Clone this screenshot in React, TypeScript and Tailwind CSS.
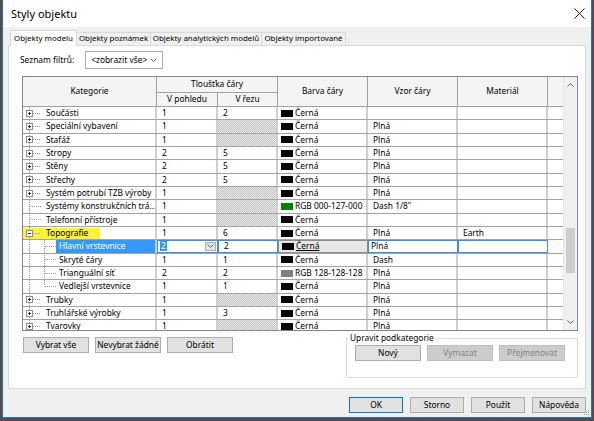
import React from "react";

type Row = {
  name: string;
  kind: "root" | "leaf" | "child";
  open?: boolean;
  v: string;
  r: string | null;
  swatch: string;
  color: string;
  pattern: string;
  mat?: string;
  hl?: boolean;
  sel?: boolean;
  last?: boolean;
};

const rows: Row[] = [
  { name: "Součásti", kind: "root", v: "1", r: "2", swatch: "#000", color: "Černá", pattern: "" },
  { name: "Speciální vybavení", kind: "root", v: "1", r: null, swatch: "#000", color: "Černá", pattern: "Plná" },
  { name: "Stafáž", kind: "root", v: "1", r: null, swatch: "#000", color: "Černá", pattern: "Plná" },
  { name: "Stropy", kind: "root", v: "2", r: "5", swatch: "#000", color: "Černá", pattern: "Plná" },
  { name: "Stěny", kind: "root", v: "2", r: "5", swatch: "#000", color: "Černá", pattern: "Plná" },
  { name: "Střechy", kind: "root", v: "2", r: "5", swatch: "#000", color: "Černá", pattern: "Plná" },
  { name: "Systém potrubí TZB výroby", kind: "root", v: "1", r: null, swatch: "#000", color: "Černá", pattern: "Plná" },
  { name: "Systémy konstrukčních trá...", kind: "leaf", v: "1", r: null, swatch: "#007f00", color: "RGB 000-127-000", pattern: "Dash 1/8\"" },
  { name: "Telefonní přístroje", kind: "leaf", v: "1", r: null, swatch: "#000", color: "Černá", pattern: "" },
  { name: "Topografie", kind: "root", open: true, hl: true, v: "1", r: "6", swatch: "#000", color: "Černá", pattern: "Plná", mat: "Earth" },
  { name: "Hlavní vrstevnice", kind: "child", sel: true, v: "2", r: "2", swatch: "#000", color: "Černá", pattern: "Plná" },
  { name: "Skryté čáry", kind: "child", v: "1", r: "1", swatch: "#000", color: "Černá", pattern: "Dash" },
  { name: "Trianguální síť", kind: "child", v: "2", r: "2", swatch: "#808080", color: "RGB 128-128-128", pattern: "Plná" },
  { name: "Vedlejší vrstevnice", kind: "child", last: true, v: "1", r: "1", swatch: "#000", color: "Černá", pattern: "Plná" },
  { name: "Trubky", kind: "root", v: "1", r: null, swatch: "#000", color: "Černá", pattern: "Plná" },
  { name: "Truhlářské výrobky", kind: "root", v: "1", r: "3", swatch: "#000", color: "Černá", pattern: "Plná" },
  { name: "Tvarovky", kind: "root", v: "1", r: null, swatch: "#000", color: "Černá", pattern: "Plná" },
];

const dot = { stroke: "#9b9b9b", strokeDasharray: "1 1", strokeWidth: 1 };

function TreeLines({ row }: { row: Row }) {
  const w = row.kind === "child" ? 33 : 20;
  return (
    <svg width={w} height="13" viewBox={`0 0 ${w} 13`} className="shrink-0 overflow-visible">
      <line x1="6.5" y1="0" x2="6.5" y2="13.5" {...dot} />
      {row.kind === "child" && (
        <>
          <line x1="21.5" y1="0" x2="21.5" y2={row.last ? 6.5 : 13.5} {...dot} />
          <line x1="22" y1="6.5" x2="33" y2="6.5" {...dot} />
        </>
      )}
      {row.kind === "leaf" && <line x1="7" y1="6.5" x2="18" y2="6.5" {...dot} />}
      {row.kind === "root" && (
        <>
          <line x1="10" y1="6.5" x2="18" y2="6.5" {...dot} />
          <rect x="3.5" y="3.5" width="6" height="6" fill="#fbfbfb" stroke="#8e8f8f" />
          <line x1="5" y1="6.5" x2="8" y2="6.5" stroke="#333" />
          {!row.open && <line x1="6.5" y1="5" x2="6.5" y2="8" stroke="#333" />}
        </>
      )}
    </svg>
  );
}

function Btn({ label, w = "w-[66px]", disabled, def }: { label: string; w?: string; disabled?: boolean; def?: boolean }) {
  return (
    <div
      className={`${w} h-[16px] flex items-center justify-center border whitespace-nowrap ${
        disabled
          ? "bg-[#cccccc] border-[#bfbfbf] text-[#838383]"
          : def
          ? "bg-[#e1e1e1] border-[#0078d7]"
          : "bg-[#e1e1e1] border-[#adadad]"
      }`}
    >
      {label}
    </div>
  );
}

function Chevron({ up }: { up?: boolean }) {
  return (
    <svg width="7" height="4" viewBox="0 0 7 4">
      <path d={up ? "M0.5 3.5L3.5 0.5L6.5 3.5" : "M0.5 0.5L3.5 3.5L6.5 0.5"} fill="none" stroke="#606060" strokeWidth="1" />
    </svg>
  );
}

const hatch =
  "bg-[image:repeating-conic-gradient(#c2c2c2_0_25%,#eaeaea_0_50%)] bg-[length:2px_2px]";

export default function App() {
  return (
    <div className="w-[594px] h-[421px] overflow-hidden bg-[#4b4f55] font-['Segoe_UI','Noto_Sans',sans-serif] text-[8.4px] leading-none text-black whitespace-nowrap">
      <div className="relative ml-[2px] w-[590px] h-[418px] border-x border-b border-[#2f6fc0] bg-[#f0f0f0] flex flex-col">
        {/* title bar */}
        <div className="h-[27px] shrink-0 bg-white flex items-center justify-between pl-[8px] pr-[6px]">
          <span className="text-[11px]">Styly objektu</span>
          <svg width="11" height="11" viewBox="0 0 11 11">
            <path d="M0.5 0.5L10.5 10.5M10.5 0.5L0.5 10.5" stroke="#222" strokeWidth="1" />
          </svg>
        </div>

        {/* tabs */}
        <div className="relative z-10 h-[18px] shrink-0 flex items-end pl-[7px] text-[7.9px]">
          <div className="w-[67px] h-[16px] -mb-px bg-white border-x border-t border-[#d9d9d9] flex items-center justify-center">
            Objekty modelu
          </div>
          <div className="w-[74px] h-[13px] border-t border-r border-[#d9d9d9] bg-[#f0f0f0] flex items-center justify-center">
            Objekty poznámek
          </div>
          <div className="w-[111px] h-[13px] border-t border-r border-[#d9d9d9] bg-[#f0f0f0] flex items-center justify-center">
            Objekty analytických modelů
          </div>
          <div className="w-[84px] h-[13px] border-t border-r border-[#d9d9d9] bg-[#f0f0f0] flex items-center justify-center">
            Objekty importované
          </div>
        </div>

        {/* tab panel */}
        <div className="ml-[5px] w-[578px] h-[344px] shrink-0 border border-[#d9d9d9] bg-white flex flex-col pt-[5px]">
          {/* filter */}
          <div className="h-[18px] flex items-center pl-[11px] gap-[11px]">
            <span>Seznam filtrů:</span>
            <div className="w-[78px] h-[18px] border border-[#acacac] bg-white flex items-center justify-between pl-[5px] pr-[5px]">
              <span>&lt;zobrazit vše&gt;</span>
              <Chevron />
            </div>
          </div>

          {/* grid */}
          <div className="mt-[7px] ml-[13px] w-[556px] h-[255px] border border-[#828790] flex overflow-hidden">
            <div className="w-[540px] flex flex-col">
              {/* header */}
              <div className="grid grid-cols-[134px_61px_60px_90px_90px_90px_15px] grid-rows-[16px_14px] bg-[#f4f4f4] text-center shrink-0">
                <div className="row-span-2 border-r border-b border-[#a0a0a0] flex items-center justify-center">Kategorie</div>
                <div className="col-span-2 border-r border-b border-[#a0a0a0] flex items-center justify-center">Tloušťka čáry</div>
                <div className="row-span-2 border-r border-b border-[#a0a0a0] flex items-center justify-center">Barva čáry</div>
                <div className="row-span-2 border-r border-b border-[#a0a0a0] flex items-center justify-center">Vzor čáry</div>
                <div className="row-span-2 border-r border-b border-[#a0a0a0] flex items-center justify-center">Materiál</div>
                <div className="row-span-2 border-b border-[#a0a0a0]" />
                <div className="border-r border-b border-[#a0a0a0] flex items-center justify-center">V pohledu</div>
                <div className="border-r border-b border-[#a0a0a0] flex items-center justify-center">V řezu</div>
              </div>

              {/* body */}
              <div className="flex flex-col overflow-hidden">
                {rows.map((row) => (
                  <div key={row.name} className="flex h-[13.33px] shrink-0 border-b border-[#a3a3a3]">
                    <div className="w-[134px] shrink-0 border-r-2 border-[#cfcfcf] flex items-center overflow-hidden">
                      {row.hl ? (
                        <div className="flex items-center h-[11px] bg-[#fbf33a] pr-[12px]">
                          <TreeLines row={row} />
                          <span className="pl-[3px]">{row.name}</span>
                        </div>
                      ) : (
                        <>
                          <TreeLines row={row} />
                          <span
                            className={`flex-1 h-full flex items-center pl-[3px] ${
                              row.sel ? "bg-[#3399ff] text-white" : ""
                            }`}
                          >
                            {row.name}
                          </span>
                        </>
                      )}
                    </div>
                    {row.sel ? (
                      <div className="w-[61px] shrink-0 border border-[#3c8fe0] flex items-center justify-between pl-[2px] pr-[1px]">
                        <span className="bg-[#3399ff] text-white px-[1px] h-[10px] flex items-center">{row.v}</span>
                        <div className="w-[11px] h-[9px] border border-[#adadad] bg-[#e5e5e5] flex items-center justify-center">
                          <Chevron />
                        </div>
                      </div>
                    ) : (
                      <div className="w-[61px] shrink-0 border-r-2 border-[#cfcfcf] flex items-center pl-[5px]">{row.v}</div>
                    )}
                    {row.r === null ? (
                      <div className={`w-[60px] shrink-0 border-r-2 border-[#cfcfcf] ${hatch}`} />
                    ) : (
                      <div
                        className={`w-[60px] shrink-0 flex items-center pl-[5px] ${
                          row.sel ? "border border-[#3c8fe0]" : "border-r-2 border-[#cfcfcf]"
                        }`}
                      >
                        {row.r}
                      </div>
                    )}
                    <div
                      className={`w-[90px] shrink-0 flex items-center pl-[3px] gap-[2px] ${
                        row.sel ? "border border-[#8c8c8c] bg-[#e6e6e6]" : "border-r-2 border-[#cfcfcf]"
                      }`}
                    >
                      <span className="w-[12px] h-[7px] shrink-0" style={{ backgroundColor: row.swatch }} />
                      <span className={row.sel ? "underline" : ""}>{row.color}</span>
                    </div>
                    <div
                      className={`w-[90px] shrink-0 flex items-center ${
                        row.sel ? "border border-[#3c8fe0] pl-[2px]" : "border-r-2 border-[#cfcfcf] pl-[5px]"
                      }`}
                    >
                      {row.pattern}
                    </div>
                    <div
                      className={`w-[90px] shrink-0 flex items-center pl-[5px] ${
                        row.sel ? "border border-[#3c8fe0]" : "border-r-2 border-[#cfcfcf]"
                      }`}
                    >
                      {row.mat ?? ""}
                    </div>
                    <div className="flex-1 bg-white" />
                  </div>
                ))}
              </div>
            </div>

            {/* scrollbar */}
            <div className="w-[14px] bg-[#f0f0f0] flex flex-col border-l border-[#e6e6e6]">
              <div className="h-[16px] flex items-center justify-center">
                <Chevron up />
              </div>
              <div className="flex-1">
                <div className="mt-[135px] mx-[2px] h-[45px] bg-[#cdcdcd]" />
              </div>
              <div className="h-[16px] flex items-center justify-center">
                <Chevron />
              </div>
            </div>
          </div>

          {/* lower buttons + group */}
          <div className="mt-[6px] flex items-start">
            <div className="ml-[14px] flex gap-[6px]">
              <Btn label="Vybrat vše" />
              <Btn label="Nevybrat žádné" />
              <Btn label="Obrátit" />
            </div>
            <fieldset className="ml-[113px] -mt-[3px] w-[232px] h-[44px] border border-[#dcdcdc] pl-[8px]">
              <legend className="px-[1px] -ml-[6px]">Upravit podkategorie</legend>
              <div className="flex gap-[6px] mt-[3px]">
                <Btn label="Nový" />
                <Btn label="Vymazat" disabled />
                <Btn label="Přejmenovat" disabled />
              </div>
            </fieldset>
          </div>
        </div>

        {/* dialog buttons */}
        <div className="flex-1 flex items-start justify-end pt-[8px] pr-[5px] gap-[7px]">
          <Btn label="OK" w="w-[54px]" def />
          <Btn label="Storno" w="w-[54px]" />
          <Btn label="Použít" w="w-[54px]" />
          <Btn label="Nápověda" w="w-[54px]" />
        </div>

        {/* size grip */}
        <svg className="absolute right-[1px] bottom-[1px]" width="7" height="7" viewBox="0 0 7 7">
          {[
            [5, 1],
            [3, 3],
            [5, 3],
            [1, 5],
            [3, 5],
            [5, 5],
          ].map(([x, y]) => (
            <rect key={`${x}-${y}`} x={x} y={y} width="1" height="1" fill="#a0a0a0" />
          ))}
        </svg>
      </div>
    </div>
  );
}
